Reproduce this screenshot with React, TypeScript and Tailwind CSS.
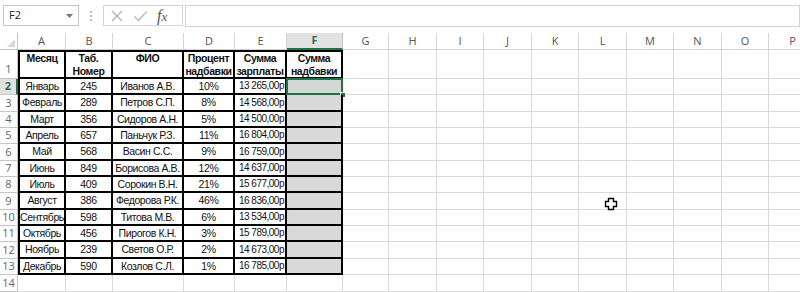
import React from "react";

const COLS = ["A", "B", "C", "D", "E", "F", "G", "H", "I", "J", "K", "L", "M", "N", "O", "P"];

const colW = [
  "w-[48px]",
  "w-[47px]",
  "w-[71px]",
  "w-[51px]",
  "w-[52px]",
  "w-[56px]",
  "w-[46px]",
  "w-[48px]",
  "w-[47px]",
  "w-[48px]",
  "w-[47px]",
  "w-[48px]",
  "w-[47px]",
  "w-[48px]",
  "w-[47px]",
  "w-[48px]",
];

const rowH = [
  "h-[16px]",
  "h-[17px]",
  "h-[16px]",
  "h-[16px]",
  "h-[17px]",
  "h-[16px]",
  "h-[16px]",
  "h-[17px]",
  "h-[16px]",
  "h-[16px]",
  "h-[17px]",
  "h-[16px]",
];

const data = [
  ["Январь", "245", "Иванов А.В.", "10%", "13 265,00р"],
  ["Февраль", "289", "Петров С.П.", "8%", "14 568,00р"],
  ["Март", "356", "Сидоров А.Н.", "5%", "14 500,00р"],
  ["Апрель", "657", "Паньчук Р.З.", "11%", "16 804,00р"],
  ["Май", "568", "Васин С.С.", "9%", "16 759,00р"],
  ["Июнь", "849", "Борисова А.В.", "12%", "14 637,00р"],
  ["Июль", "409", "Сорокин В.Н.", "21%", "15 677,00р"],
  ["Август", "386", "Федорова Р.К.", "46%", "16 836,00р"],
  ["Сентябрь", "598", "Титова М.В.", "6%", "13 534,00р"],
  ["Октябрь", "456", "Пирогов К.Н.", "3%", "15 789,00р"],
  ["Ноябрь", "239", "Светов О.Р.", "2%", "14 673,00р"],
  ["Декабрь", "590", "Козлов С.Л.", "1%", "16 785,00р"],
];

const headers = [
  ["Месяц"],
  ["Таб.", "Номер"],
  ["ФИО"],
  ["Процент", "надбавки"],
  ["Сумма", "зарплаты"],
  ["Сумма", "надбавки"],
];

const cellFont = "font-['Liberation_Sans',Arial,sans-serif] text-[10.5px] tracking-[-0.4px] text-[#111]";
const uiFont = "font-['Open_Sans','Noto_Sans',sans-serif]";

const RowHead = ({ n, h, active }: { n: number; h: string; active?: boolean }) => (
  <div
    className={`${h} w-[18px] shrink-0 flex items-center justify-center ${uiFont} text-[11px] ${
      active
        ? "bg-[#e1e1e1] text-[#217346] font-bold border-r-2 border-r-[#217346] border-b border-b-[#c6c6c6]"
        : "text-[#666] border-r border-b border-[#c6c6c6]"
    }`}
  >
    {n}
  </div>
);

const EmptyCells = ({ from }: { from: number }) => (
  <>
    {colW.slice(from).map((w, i) => (
      <div key={i} className={`${w} shrink-0 border-r border-b border-[#dadada]`} />
    ))}
  </>
);

export default function App() {
  return (
    <div className="relative w-[800px] h-[292px] overflow-hidden bg-white">
      {/* formula bar */}
      <div className="h-[33px] flex items-start pt-[5px] pl-[3px]">
        <div className="w-[76px] h-[21px] border border-[#c6c6c6] flex items-center justify-between pl-[5px] pr-[5px]">
          <span className={`${uiFont} text-[11px] text-[#222]`}>F2</span>
          <svg width="7" height="4" viewBox="0 0 7 4">
            <path d="M0 0 L7 0 L3.5 4 Z" fill="#777" />
          </svg>
        </div>
        <div className="w-[24px] h-[21px] flex flex-col items-center justify-center gap-[2px]">
          <span className="w-[2px] h-[2px] bg-[#bbb]" />
          <span className="w-[2px] h-[2px] bg-[#bbb]" />
          <span className="w-[2px] h-[2px] bg-[#bbb]" />
        </div>
        <div className="w-[80px] h-[21px] border border-[#d4d4d4] flex items-center pl-[6px] gap-[9px]">
          <svg width="14" height="14" viewBox="0 0 14 14">
            <path d="M2 2 L12 12 M12 2 L2 12" stroke="#b5b5b5" strokeWidth="1.4" />
          </svg>
          <svg width="15" height="14" viewBox="0 0 15 14">
            <path d="M1.5 7.5 L5.5 11.5 L13.5 2.5" stroke="#c0c0c0" strokeWidth="1.6" fill="none" />
          </svg>
          <span className="font-['Liberation_Serif',serif] italic text-[16px] leading-none text-[#555]">
            f<span className="text-[13px]">x</span>
          </span>
        </div>
        <div className="ml-[2px] flex-1 h-[22px] border border-[#d4d4d4]" />
      </div>

      {/* column headers */}
      <div className="flex h-[17px]">
        <div className="w-[18px] shrink-0 border-r border-b border-[#c6c6c6] flex items-end justify-end pr-[2px] pb-[2px]">
          <svg width="8" height="8" viewBox="0 0 8 8">
            <path d="M8 0 L8 8 L0 8 Z" fill="#d9d9d9" />
          </svg>
        </div>
        {COLS.map((c, i) =>
          c === "F" ? (
            <div
              key={c}
              className={`${colW[i]} shrink-0 bg-[#e1e1e1] border-r border-r-[#c6c6c6] border-b-2 border-b-[#217346] flex items-center justify-center ${uiFont} text-[11px] font-bold text-[#217346]`}
            >
              {c}
            </div>
          ) : (
            <div
              key={c}
              className={`${colW[i]} shrink-0 border-r border-b border-[#d4d4d4] flex items-center justify-center ${uiFont} text-[11px] text-[#555]`}
            >
              {c}
            </div>
          )
        )}
      </div>

      {/* row 1 */}
      <div className="flex h-[29px]">
        <div className={`w-[18px] shrink-0 border-r border-b border-[#c6c6c6] flex items-end justify-center pb-[1px] ${uiFont} text-[11px] text-[#666]`}>
          1
        </div>
        {headers.map((lines, i) => (
          <div
            key={i}
            className={`${colW[i]} shrink-0 border-t-2 border-r-2 border-b-2 border-black ${i === 0 ? "border-l-2" : ""} flex flex-col items-center ${cellFont} font-bold leading-[13px] tracking-[-0.3px]`}
          >
            {lines.map((l) => (
              <span key={l}>{l}</span>
            ))}
          </div>
        ))}
        <EmptyCells from={6} />
      </div>

      {/* data rows */}
      {data.map((r, ri) => (
        <div key={ri} className="flex">
          <RowHead n={ri + 2} h={rowH[ri]} active={ri === 0} />
          {r.map((v, ci) => (
            <div
              key={ci}
              className={`${rowH[ri]} ${colW[ci]} shrink-0 border-r-2 border-b-2 border-black ${ci === 0 ? "border-l-2" : ""} flex items-center ${
                ci === 4 ? "justify-end pr-[1px]" : "justify-center"
              } ${cellFont} ${ci === 4 ? "text-[10px] tracking-[-0.5px]" : ""} leading-none whitespace-nowrap`}
            >
              {v}
            </div>
          ))}
          <div
            className={`${rowH[ri]} w-[56px] shrink-0 border-r-2 border-b-2 border-black relative ${
              ri === 0 ? "bg-[#d3d8d4]" : "bg-[#d9d9d9]"
            }`}
          >
            {ri === 0 && (
              <>
                <div className="absolute left-[-1px] top-[-1px] right-[-2px] bottom-[-2px] border-2 border-[#217346]" />
                <div className="absolute right-[-5px] bottom-[-5px] w-[6px] h-[6px] bg-[#217346] border border-white" />
              </>
            )}
          </div>
          <EmptyCells from={6} />
        </div>
      ))}

      {/* row 14 */}
      <div className="flex">
        <RowHead n={14} h="h-[17px]" />
        <EmptyCells from={0} />
      </div>

      {/* mouse pointer */}
      <svg className="absolute left-[604px] top-[197px]" width="14" height="14" viewBox="0 0 14 14">
        <path
          d="M4.5 1.5 H9.5 V4.5 H12.5 V9.5 H9.5 V12.5 H4.5 V9.5 H1.5 V4.5 H4.5 Z"
          fill="#fff"
          stroke="#000"
          strokeWidth="1.4"
        />
      </svg>
    </div>
  );
}
